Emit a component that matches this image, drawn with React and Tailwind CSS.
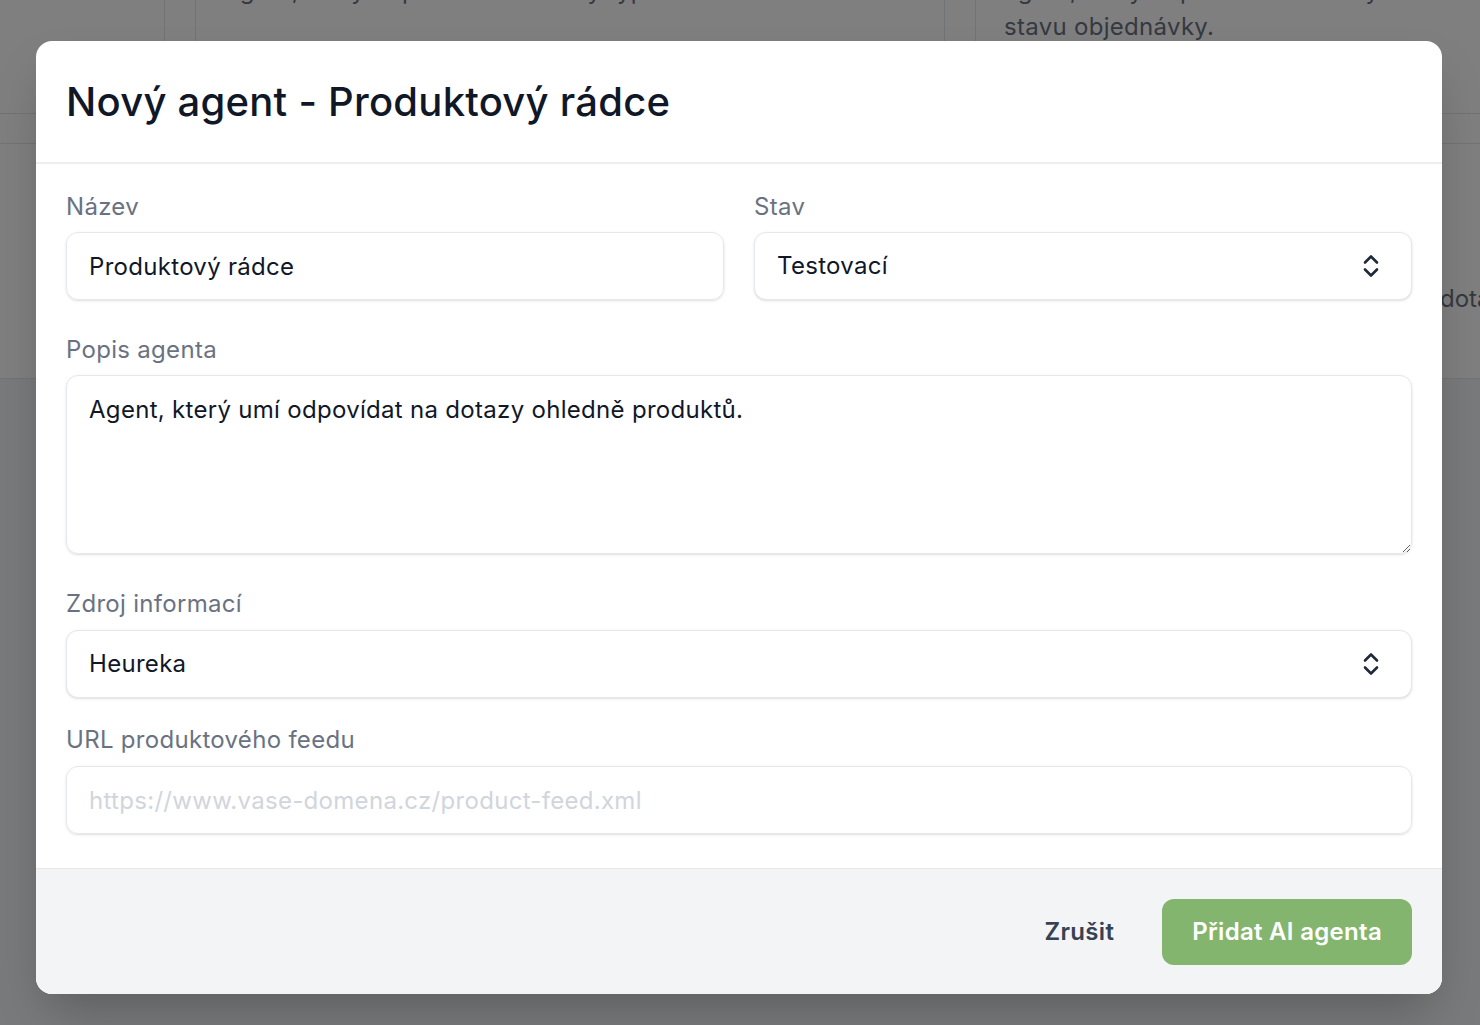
import { useState } from "react";

const font = { fontFamily: "Inter, 'Noto Sans', sans-serif" };

const ChevronUpDown = () => (
    <svg width="24" height="32" viewBox="0 0 24 32" fill="none" stroke="#1f2937" strokeWidth="2.6" strokeLinecap="round" strokeLinejoin="round">
        <path d="M6 12.5l6-6 6 6" />
        <path d="M6 19.5l6 6 6-6" />
    </svg>
);

const Label = ({ children, className = "" }) => (
    <p className={`text-[24px] leading-[32px] tracking-[0.3px] text-gray-500 ${className}`}>{children}</p>
);

const SelectBox = ({ value }) => (
    <button type="button" className="w-full h-[68px] rounded-[12px] border border-gray-200 bg-white shadow-sm pl-[22px] pr-[28px] flex items-center justify-between text-left">
        <span className="text-[24px] tracking-[0.3px] text-gray-900">{value}</span>
        <ChevronUpDown />
    </button>
);

// page behind the dialog
const Backdrop = () => (
    <div className="absolute inset-0 bg-gray-100">
        <div className="bg-white">
            <div className="flex h-[115px] -mt-[1px] border-b border-gray-200">
                <div className="w-[165px] shrink-0 border-r border-gray-200" />
                <div className="w-[30px] shrink-0" />
                <div className="w-[750px] shrink-0 border-x border-gray-200 px-[30px] -mt-[26px] overflow-hidden">
                    <p className="text-[24px] leading-[36px] tracking-[0.3px] text-gray-500 whitespace-nowrap">agent, který odpovídá na dotazy typu</p>
                </div>
                <div className="w-[30px] shrink-0" />
                <div className="flex-1 min-w-0 border-l border-gray-200 px-[28px] -mt-[26px] overflow-hidden">
                    <p className="text-[24px] leading-[36px] tracking-[0.3px] text-gray-500 whitespace-nowrap">agent, který odpovídá na dotazy</p>
                    <p className="text-[24px] leading-[36px] tracking-[0.3px] text-gray-500">stavu objednávky.</p>
                </div>
            </div>
            <div className="h-[30px] border-b border-gray-200" />
            <div className="h-[235px] border-b border-gray-200 overflow-hidden pt-[139px] pl-[1440px]">
                <p className="text-[24px] leading-[32px] text-gray-500 whitespace-nowrap">dotazy</p>
            </div>
        </div>
    </div>
);

export default function App() {
    const [description, setDescription] = useState("Agent, který umí odpovídat na dotazy ohledně produktů.");

    return (
        <div className="relative w-[1480px] h-[1025px] overflow-hidden" style={font}>
            <Backdrop />
            <div className="absolute inset-0 bg-black/50" />

            <div className="absolute left-[36px] top-[41px] w-[1406px] rounded-[16px] bg-white shadow-2xl overflow-hidden">
                <div className="h-[123px] px-[30px] flex items-center border-b-2 border-gray-200/70">
                    <h2 className="text-[40px] font-medium text-gray-900 tracking-[0.25px]">Nový agent - Produktový rádce</h2>
                </div>

                <div className="px-[30px] pt-[27px] pb-[34px]">
                    <div className="grid grid-cols-2 gap-[30px]">
                        <div>
                            <Label className="mb-[9px]">Název</Label>
                            <input
                                defaultValue="Produktový rádce"
                                className="w-full h-[68px] rounded-[12px] border border-gray-200 shadow-sm px-[22px] text-[24px] tracking-[0.3px] text-gray-900 outline-none"
                            />
                        </div>
                        <div>
                            <Label className="mb-[9px]">Stav</Label>
                            <SelectBox value="Testovací" />
                        </div>
                    </div>

                    <Label className="mt-[34px] mb-[9px]">Popis agenta</Label>
                    <textarea
                        value={description}
                        onChange={(e) => setDescription(e.target.value)}
                        className="block w-full h-[179px] rounded-[12px] border border-gray-200 shadow-sm px-[22px] py-[18px] text-[24px] leading-[32px] tracking-[0.3px] text-gray-900 outline-none"
                    />

                    <Label className="mt-[34px] mb-[10px]">Zdroj informací</Label>
                    <SelectBox value="Heureka" />

                    <Label className="mt-[26px] mb-[10px]">URL produktového feedu</Label>
                    <input
                        placeholder="https://www.vase-domena.cz/product-feed.xml"
                        className="w-full h-[68px] rounded-[12px] border border-gray-200 shadow-sm px-[22px] text-[24px] tracking-[0.3px] text-gray-900 placeholder:text-gray-300 outline-none"
                    />
                </div>

                <div className="h-[126px] bg-gray-100 border-t border-gray-200 px-[30px] flex items-center justify-end">
                    <button type="button" className="text-[24px] tracking-[0.3px] font-semibold text-gray-700 mr-[48px]">Zrušit</button>
                    <button type="button" className="h-[66px] px-[30px] rounded-[12px] bg-[#83b56f] text-[24px] tracking-[0.3px] font-semibold text-white">
                        Přidat AI agenta
                    </button>
                </div>
            </div>
        </div>
    );
}
